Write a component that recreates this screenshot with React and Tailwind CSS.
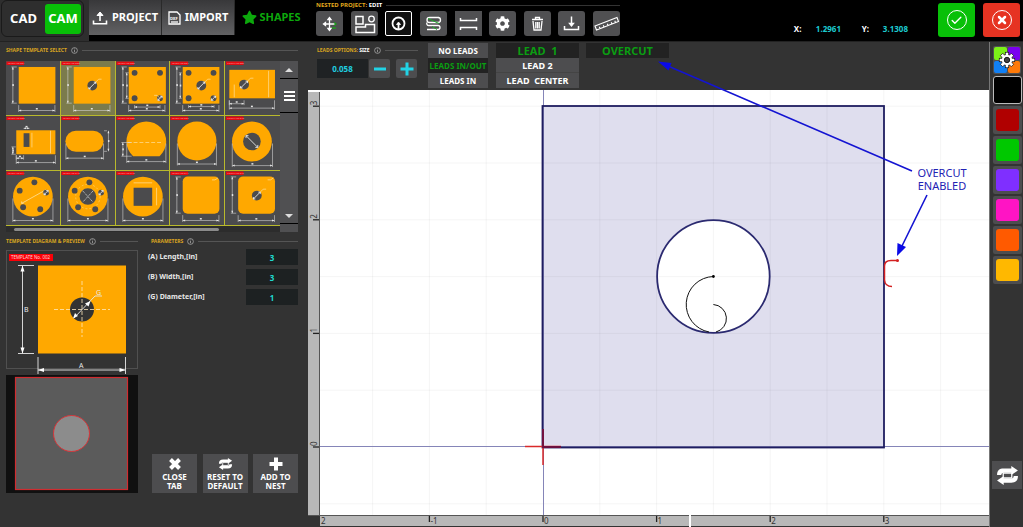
import { useState } from "react";
import { Check, X } from "lucide-react";
import { FaCog, FaStar } from "react-icons/fa";

const ORANGE = "#ffa800";
const DARK = "#4b4b4d";

// --- SHARED SMALL PIECES ---
function InfoIcon() {
  return (
    <svg viewBox="0 0 8 8" className="w-[7px] h-[7px] shrink-0" fill="none" stroke="#b5b5b5" strokeWidth="0.8">
      <circle cx="4" cy="4" r="3.3" />
      <path d="M4 3.4V6M4 1.8v0.9" />
    </svg>
  );
}

function SectionTitle({ text, extra, info = true }) {
  return (
    <div className="flex items-center gap-1 h-2 whitespace-nowrap">
      <h2 className="text-[5px] leading-2 font-bold text-[#d9a521]">
        {text}
        {extra && <span className="text-white"> {extra}</span>}
      </h2>
      {info && <InfoIcon />}
      <span className="flex-1 h-px bg-[#555]" />
    </div>
  );
}

function LoopIcon({ className }) {
  return (
    <svg viewBox="0 0 24 20" className={className} fill="#fff">
      <path d="M1 9.5C1 4.5 3.500 2.500 8 2.500H16V0L23 4.700L16 9.500V7H8.500C6 7 5.500 8 5.500 9.500Z" />
      <path d="M23 10.500C23 15.500 20.500 17.500 16 17.500H8V20L1 15.300L8 10.500V13H15.500C18 13 18.500 12 18.500 10.500Z" />
      <rect x="7.500" y="7.500" width="9" height="5" fill="#4d4d4f" stroke="#fff" strokeWidth="1.300" />
    </svg>
  );
}

function StrokeIcon({ d, width = 4 }) {
  return (
    <svg viewBox="0 0 14 14" className="w-[14px] h-[14px]" fill="none" stroke="currentColor" strokeWidth={width}>
      <path d={d} />
    </svg>
  );
}

const PLUS = "M7 0.5V13.5M0.5 7H13.5";
const MINUS = "M1 7H13";
const CROSS = "M2.500 2.500L11.500 11.500M11.500 2.500L2.500 11.500";

// --- TEMPLATE THUMBNAILS ---
function HDim({ x1, x2, y, from }) {
  return (
    <g stroke="#d5d5d5" strokeWidth="0.6" fill="#e5e5e5">
      <path d={`M${x1} ${from}V${y + 1.5}M${x2} ${from}V${y + 1.5}M${x1} ${y}H${x2}`} fill="none" />
      <path d={`M${x1} ${y}l2.500 -1v2zM${x2} ${y}l-2.500 -1v2z`} stroke="none" />
      <rect x={(x1 + x2) / 2 - 1} y={y - 2.5} width="2" height="1.500" stroke="none" />
    </g>
  );
}

function VDim({ y1, y2, x, from }) {
  return (
    <g stroke="#d5d5d5" strokeWidth="0.6" fill="#e5e5e5">
      <path d={`M${from} ${y1}H${x - 1.5}M${from} ${y2}H${x - 1.5}M${x} ${y1}V${y2}`} fill="none" />
      <path d={`M${x} ${y1}l-1 2.500h2zM${x} ${y2}l-1 -2.500h2z`} stroke="none" />
      <rect x={x - 0.5} y={(y1 + y2) / 2 - 1} width="1.500" height="2" stroke="none" />
    </g>
  );
}

function Hole({ x, y, r = 3, mark, leader }) {
  const d = r * 0.7;
  return (
    <g>
      <circle cx={x} cy={y} r={r} fill={DARK} />
      {mark && (
        <path
          d={`M${x - d} ${y + d}L${x + d} ${y - d}M${x - d} ${y + d}v-2M${x - d} ${y + d}h2M${x + d} ${y - d}v2M${x + d} ${y - d}h-2`}
          stroke="#fff" strokeWidth="0.8" fill="none"
        />
      )}
      {leader && <path d={`M${x + d} ${y - d}l3 -3h3`} stroke="#ffe2a0" strokeWidth="0.7" fill="none" />}
    </g>
  );
}

const BOLTS = [[29, 11.5], [14, 20], [17.5, 37], [35, 39]];

function Bolts() {
  return (
    <>
      {BOLTS.map(([x, y]) => <Hole key={x} x={x} y={y} />)}
      <Hole x={41} y={22} mark />
    </>
  );
}

function SquareDims() {
  return (
    <>
      <HDim x1={13} x2={50} y={50.5} from={45} />
      <VDim y1={6} y2={43} x={7} from={11} />
    </>
  );
}

const roundDims = <HDim x1={7} x2={48} y={50.5} from={28} />;

const TEMPLATES = [
  { id: "001", art: <><rect x="13" y="6" width="37.500" height="37.500" fill={ORANGE} /><SquareDims /></> },
  { id: "002", art: <><rect x="13" y="6" width="37.500" height="37.500" fill={ORANGE} /><Hole x={32} y={25} r={5} mark leader /><SquareDims /></> },
  {
    id: "003",
    art: (
      <>
        <rect x="13" y="6" width="38" height="37.500" fill={ORANGE} />
        <Hole x={19} y={12} /><Hole x={45} y={12} /><Hole x={19} y={38} /><Hole x={45} y={38} mark />
        <path d="M45 38l-3 -3h-3" stroke="#ffe2a0" strokeWidth="0.700" fill="none" />
        <SquareDims />
        <VDim y1={12} y2={38} x={11} from={13} />
        <HDim x1={19} x2={45} y={47} from={45} />
      </>
    ),
  },
  {
    id: "004",
    art: (
      <>
        <rect x="13" y="6" width="37.500" height="37.500" fill={ORANGE} />
        <Hole x={19} y={12} /><Hole x={44.5} y={12} /><Hole x={19} y={38} /><Hole x={44.5} y={38} mark />
        <Hole x={32} y={25} r={5} mark leader />
        <SquareDims />
        <VDim y1={12} y2={38} x={10.5} from={12} />
        <HDim x1={19} x2={45} y={46.5} from={45} />
      </>
    ),
  },
  {
    id: "005",
    art: (
      <>
        <rect x="4" y="9" width="46.500" height="29" fill={ORANGE} />
        <Hole x={19} y={24} r={5} mark leader />
        <path d="M44 10V37M9 24V37" stroke="#ffe2a0" strokeWidth="0.700" />
        <HDim x1={4} x2={19} y={43.5} from={40} />
        <HDim x1={4} x2={50} y={48} from={40} />
      </>
    ),
  },
  {
    id: "006",
    art: (
      <>
        <rect x="10.500" y="14.500" width="40" height="24.500" fill={ORANGE} />
        <rect x="18" y="17.500" width="6" height="14" fill={DARK} />
        <path d="M45.500 15V38M26.500 17V32" stroke="#ffe2a0" strokeWidth="0.700" />
        <HDim x1={18} x2={24} y={12.5} from={14} />
        <HDim x1={10.5} x2={18} y={43} from={40} />
        <HDim x1={10.5} x2={50.5} y={47.5} from={40} />
        <VDim y1={31.5} y2={39} x={7} from={10} />
      </>
    ),
  },
  { id: "007", art: <><rect x="4.500" y="15" width="39" height="21.500" rx="10.700" fill={ORANGE} /><HDim x1={5} x2={43.5} y={43} from={28} /><VDim y1={15} y2={36} x={48.5} from={44} /></> },
  {
    id: "008",
    art: (
      <>
        <path d="M17.500 41A20.300 20.300 0 1 1 44.500 41Z" fill={ORANGE} />
        <path d="M12 27H48" stroke="#ffe2a0" strokeWidth="0.700" strokeDasharray="4 2" />
        <VDim y1={27} y2={41} x={7} from={16} />
        <HDim x1={11} x2={51} y={46.5} from={28} />
      </>
    ),
  },
  { id: "009", art: <><circle cx="27.500" cy="25.500" r="20" fill={ORANGE} /><HDim x1={7.5} x2={47.5} y={49} from={28} /></> },
  { id: "010", art: <><circle cx="27" cy="26" r="20.300" fill={ORANGE} /><Hole x={27} y={26} r={9} /><path d="M21 20L33 32M21 20v2.500M21 20h2.500M33 32v-2.500M33 32h-2.500" stroke="#fff" strokeWidth="0.800" />{roundDims}</> },
  { id: "011", art: <><circle cx="27.500" cy="26" r="20.300" fill={ORANGE} /><path d="M16 33L41 19M16 33v-2M16 33h2" stroke="#ffe2a0" strokeWidth="0.800" /><Bolts />{roundDims}</> },
  { id: "012", art: <><circle cx="27.500" cy="26" r="20.300" fill={ORANGE} /><circle cx="27.500" cy="26" r="12.500" fill="none" stroke="#ffe2a0" strokeWidth="0.500" strokeDasharray="2 2" /><Hole x={27.5} y={26} r={8.5} /><path d="M22 20L33 32M33 20L22 32" stroke="#ddd" strokeWidth="0.700" strokeDasharray="3 1" /><Bolts />{roundDims}</> },
  { id: "013", art: <><circle cx="27.500" cy="26" r="20.300" fill={ORANGE} /><rect x="18" y="17" width="19" height="18.500" fill={DARK} /><path d="M18 12H37M41.500 17V35" stroke="#ffe2a0" strokeWidth="0.700" />{roundDims}</> },
  { id: "014", art: <><rect x="13" y="5.500" width="37.500" height="38" rx="5" fill={ORANGE} /><path d="M43 9h3l3 -2" stroke="#ffe2a0" strokeWidth="0.700" fill="none" /><SquareDims /></> },
  { id: "015", art: <><rect x="13" y="5.500" width="37.500" height="38" rx="5" fill={ORANGE} /><path d="M43 9h3l3 -2" stroke="#ffe2a0" strokeWidth="0.700" fill="none" /><Hole x={32} y={25} r={5} mark leader /><SquareDims /></> },
];

function TemplateList() {
  const [selected, setSelected] = useState("002");
  return (
    <div className="flex bg-[#4b4b4d] mt-[7px]">
      <div className="flex-1">
        <div className="grid grid-cols-5">
          {TEMPLATES.map((t) => (
            <button
              key={t.id}
              type="button"
              aria-label={`Template ${t.id}`}
              onClick={() => setSelected(t.id)}
              className={`border-r border-b border-[#b9b92c] nth-[5n]:border-r-0 ${selected === t.id ? "bg-[#7b7b4c]" : "bg-[#4b4b4d]"}`}
            >
              <svg viewBox="0 0 55 55" className="block w-full h-[54px]">
                <rect x="0.500" y="0.500" width="18" height="3.500" fill="#e80a10" />
                <text x="2" y="3.300" fontSize="2.500" fill="#f2a0a0">TEMPLATE {t.id}</text>
                {t.art}
              </svg>
            </button>
          ))}
        </div>
        <div className="h-[6px] bg-[#2c2c2c] flex items-center pl-2">
          <div className="h-[3px] w-[77%] bg-[#8b8b8b] rounded-sm" />
        </div>
      </div>
      <div className="w-[18px] flex flex-col items-center bg-[#505052]">
        <button type="button" aria-label="Scroll up" className="h-[18px] w-full flex items-center justify-center border-b border-black">
          <svg viewBox="0 0 8 4" className="w-2 h-1"><path d="M0 4L4 0L8 4Z" fill="#ddd" /></svg>
        </button>
        <button type="button" aria-label="List view" className="h-[34px] w-full flex flex-col items-center justify-center gap-[2px] border-b border-black">
          <span className="w-[11px] h-[2px] bg-white" />
          <span className="w-[11px] h-[2px] bg-white" />
          <span className="w-[11px] h-[2px] bg-white" />
        </button>
        <div className="flex-1" />
        <button type="button" aria-label="Scroll down" className="h-4 w-full flex items-center justify-center border-b border-black">
          <svg viewBox="0 0 8 4" className="w-2 h-1"><path d="M0 0L4 4L8 0Z" fill="#ddd" /></svg>
        </button>
        <div className="h-[8px]" />
      </div>
    </div>
  );
}

function TemplateDiagram() {
  return (
    <svg viewBox="6 249 132 126" className="block w-full mt-1" aria-label="Template diagram">
      <rect x="6.500" y="250.500" width="131" height="118" fill="none" stroke="#505050" />
      <rect x="9" y="254" width="44" height="7" fill="#fb0007" />
      <text x="11" y="259.300" fontSize="4.500" fill="#ffd5d5">TEMPLATE No. 002</text>
      <rect x="38" y="265.500" width="88" height="88" fill={ORANGE} />
      <circle cx="82" cy="309.500" r="12" fill="#333" />
      <g stroke="#ffe9bd" strokeWidth="0.800" strokeDasharray="4 2">
        <path d="M54 309.500H110M82 281V337" />
      </g>
      <g stroke="#e6e6e6" strokeWidth="0.900" fill="none">
        <path d="M18 265.500H34M18 353.500H34M22.500 266V353M38 357V374M125.500 357V374M38 370H125.500" />
        <path d="M74 318L95 296H102" />
      </g>
      <g fill="#fff">
        <path d="M22.500 265.500l-2 6h4zM22.500 353.500l-2 -6h4zM38 370l6 -2v4zM125.500 370l-6 -2v4z" />
        <path d="M73 318.500l2 -5.500l3 3zM90.500 301l-2 5.500l-3.500 -3z" />
      </g>
      <g fill="#e8e8e8" fontSize="7">
        <text x="24" y="311.500">B</text>
        <text x="79" y="367.500">A</text>
        <text x="96" y="295">G</text>
      </g>
    </svg>
  );
}

const PARAMS = [
  { id: "length", label: "(A) Length,[in]", value: "3" },
  { id: "width", label: "(B) Width,[in]", value: "3" },
  { id: "diameter", label: "(G) Diameter,[in]", value: "1" },
];

function ActionButton({ icon, line1, line2 }) {
  return (
    <button type="button" className="w-[45px] h-[39px] bg-[#4d4d4f] flex flex-col items-center justify-center text-white font-bold whitespace-nowrap">
      <span className="h-[14px] mb-px flex items-center">{icon}</span>
      <span className="text-[8px] leading-[9px]">{line1}<br />{line2}</span>
    </button>
  );
}

function Sidebar() {
  return (
    <aside className="w-[308px] shrink-0 bg-[#333] pl-[6px] pr-[10px] pt-1">
      <SectionTitle text="SHAPE TEMPLATE SELECT" />
      <TemplateList />
      <div className="flex gap-[10px] mt-[5px]">
        <div className="w-[132px] shrink-0">
          <SectionTitle text="TEMPLATE DIAGRAM & PREVIEW" />
          <TemplateDiagram />
          <svg viewBox="0 0 132 118" className="block w-full bg-[#101010]" aria-label="Shape preview">
            <rect x="9.500" y="2.500" width="112" height="112" fill="#5b5b5b" stroke="#d02c30" strokeWidth="1.200" />
            <circle cx="65.500" cy="58.500" r="18" fill="#8c8c8c" stroke="#d83438" />
          </svg>
        </div>
        <div className="flex-1 flex flex-col">
          <div className="pl-[3px]"><SectionTitle text="PARAMETERS" /></div>
          <div className="flex flex-col gap-1 mt-1">
            {PARAMS.map((p) => (
              <div key={p.id} className="flex items-center justify-between">
                <label htmlFor={p.id} className="text-[7px] font-bold text-[#e8e8e8]">{p.label}</label>
                <input
                  id={p.id}
                  defaultValue={p.value}
                  className="w-[52px] h-4 bg-[#1d2122] text-[#1fd9cf] text-[8px] font-bold text-center"
                />
              </div>
            ))}
          </div>
          <div className="flex justify-between mt-auto ml-1">
            <ActionButton icon={<StrokeIcon d={CROSS} />} line1="CLOSE" line2="TAB" />
            <ActionButton icon={<LoopIcon className="w-[15px] h-3" />} line1="RESET TO" line2="DEFAULT" />
            <ActionButton icon={<StrokeIcon d={PLUS} />} line1="ADD TO" line2="NEST" />
          </div>
        </div>
      </div>
    </aside>
  );
}

// --- TOP BAR ---
const TOOLS = [
  { name: "Move", art: <><path d="M13.500 7v12M8 13h11" /><path d="M12 8.500l1.500 -2l1.500 2zM12 17.500l1.500 2l1.500 -2zM9.500 11.500l-2 1.500l2 1.500z" fill="#fff" /><path d="M18 11.500l2 1.500l-2 1.500M16 17h4" stroke="#1c9a1c" /></> },
  { name: "Nest", art: <><rect x="5" y="5.500" width="7" height="7.500" strokeWidth="1.500" /><circle cx="20.500" cy="8" r="2.800" /><path d="M5 21.500V16h9.500v-2.500h9v8z" strokeWidth="1.500" /></> },
  { name: "Leads", active: true, art: <><circle cx="13.500" cy="12.500" r="6" strokeWidth="1.800" /><path d="M13.500 18V12" strokeWidth="1.800" /><path d="M11.500 13.500l2 -2.500l2 2.500z" fill="#fff" strokeWidth="0.800" /></> },
  { name: "Path order", art: <><path d="M19 6.500H9.500a2.500 2.500 0 0 0 0 5H18a2.500 2.500 0 0 0 0 -5M7 18.500H18a2 2 0 0 0 0 -4H9a2 2 0 0 1 -2 -3" /><path d="M8 7.500l11 5M17 18.500l-5 -3" stroke="#1fae2b" strokeWidth="1" /></> },
  { name: "Spacing", square: true, art: <path d="M5.500 7v2.500h16V7M5.500 19v-2.500h16V19" strokeWidth="1.500" /> },
  { name: "Settings", icon: <FaCog size={15} /> },
  { name: "Delete", art: <><path d="M8 8.500h11M11.500 8V6.500h4V8" /><path d="M9 10l1 9h7l1 -9M11.800 11v6.500M13.500 11v6.500M15.200 11v6.500" /></> },
  { name: "Save", art: <><path d="M13.500 5.500v8" strokeWidth="1.500" /><path d="M11.500 12.500h4l-2 2.500z" fill="#fff" /><path d="M6.500 15v3.500h14V15" strokeWidth="1.500" /></> },
  { name: "Measure", art: <path d="M2 15L24 6.500l1.500 4L3.500 19zM7 17.500l-0.700 -1.700M11 16l-0.700 -1.700M15 14.500l-0.700 -1.700M19 13l-0.700 -1.700M22.500 11.500l-0.700 -1.700" strokeWidth="1.100" /> },
];

function ToolButton({ tool }) {
  let look = "bg-[#505052] rounded-[3px]";
  if (tool.active) look = "bg-[#111] border border-white rounded-[2px]";
  if (tool.square) look = "bg-[#505052]";
  return (
    <button type="button" aria-label={tool.name} className={`w-[27px] h-[25px] flex items-center justify-center text-white ${look}`}>
      {tool.icon || (
        <svg viewBox="0 0 27 25" className="w-[27px] h-[25px] shrink-0" fill="none" stroke="#fff" strokeWidth="1.300">{tool.art}</svg>
      )}
    </button>
  );
}

function TopBar() {
  const tab = "w-[73px] h-[35px] flex items-center justify-center gap-[4px] text-[11px] font-bold whitespace-nowrap border-r border-[#2a2a2a]";
  return (
    <header className="flex h-[42px] shrink-0 bg-black border-b border-[#222]">
      <div className="w-[89px] shrink-0 bg-[#2e2e2e] px-px pb-1">
        <div className="h-full w-[83px] border border-[#1a1a1a] rounded-md flex items-center pr-[2px] text-white text-[13px] font-bold">
          <button type="button" className="flex-1">CAD</button>
          <button type="button" className="w-9 h-[30px] bg-[#08bf08] rounded-[3px]">CAM</button>
        </div>
      </div>
      <nav className="flex shrink-0 w-[219px]">
        <button type="button" className={`${tab} bg-linear-to-b from-[#38383a] to-[#626264] text-white`}>
          <svg viewBox="0 0 16 14" className="w-4 h-[14px]" fill="none" stroke="#fff" strokeWidth="1.600">
            <path d="M8 10V3" /><path d="M5 4.500L8 1l3 3.500z" fill="#fff" strokeWidth="1" /><path d="M1.500 9.500v3.200h13V9.500" />
          </svg>
          PROJECT
        </button>
        <button type="button" className={`${tab} bg-linear-to-b from-[#38383a] to-[#626264] text-white`}>
          <svg viewBox="0 0 13 14" className="w-[13px] h-[14px]" fill="none" stroke="#fff" strokeWidth="1.300">
            <path d="M1 1h8l3 3v9H1z" /><path d="M3 11h7" />
            <text x="2" y="8.500" fontSize="4" fill="#fff" stroke="none">DXF</text>
          </svg>
          IMPORT
        </button>
        <button type="button" className="flex-1 h-[34px] flex items-center justify-center gap-[2px] text-[11px] font-bold text-[#0ca80c]">
          <FaStar size={15} />SHAPES
        </button>
      </nav>
      <div className="w-[304px] shrink-0 ml-2 pt-px">
        <div className="flex items-center gap-1 h-[9px] whitespace-nowrap">
          <h1 className="text-[6px] leading-[9px] font-bold text-[#e0a81e]">NESTED PROJECT: <span className="text-white">EDIT</span></h1>
          <span className="flex-1 h-px bg-[#333]" />
        </div>
        <div className="flex justify-between mt-px">
          {TOOLS.map((tool) => <ToolButton key={tool.name} tool={tool} />)}
        </div>
      </div>
      <div className="flex-1" />
      <dl className="flex items-center pt-4 mr-[30px] text-[8px] font-bold text-white">
        <dt className="w-[22px]">X:</dt>
        <dd className="w-[46px] text-[#1ccbd0]">1.2961</dd>
        <dt className="w-[21px]">Y:</dt>
        <dd className="text-[#1ccbd0]">3.1308</dd>
      </dl>
      <div className="flex gap-2 pt-[3px] pr-[3px]">
        <button type="button" aria-label="Accept" className="w-[37px] h-[34px] rounded-[3px] bg-[#08c008] flex items-center justify-center text-white">
          <span className="w-5 h-5 rounded-full border border-white flex items-center justify-center"><Check size={13} strokeWidth={2.5} /></span>
        </button>
        <button type="button" aria-label="Cancel" className="w-[37px] h-[34px] rounded-[3px] bg-[#e63322] flex items-center justify-center text-white">
          <span className="w-5 h-5 rounded-full border border-white flex items-center justify-center"><X size={12} strokeWidth={5} /></span>
        </button>
      </div>
    </header>
  );
}

// --- LEADS BAR ---
function LeadsBar() {
  const opt = "block w-full h-[15px] bg-[#4d4d4f] text-white font-bold leading-[15px] whitespace-nowrap";
  const on = "block w-full h-[15px] bg-[#222] text-[#0b9d12] font-bold leading-[15px] whitespace-nowrap";
  const step = "w-[21px] h-[19px] bg-[#4d4d4f] rounded-[2px] flex items-center justify-center text-[#22d3e6]";
  return (
    <div className="h-12 shrink-0 bg-[#333] flex pl-[9px] pt-px">
      <div className="w-[101px] shrink-0 pt-[3px]">
        <SectionTitle text="LEADS OPTIONS:" extra="SIZE" />
        <div className="flex mt-[5px]">
          <input aria-label="Lead size" defaultValue="0.058" className="w-[51px] h-[19px] bg-[#1f2224] text-[#20cfe0] text-[8px] font-bold text-center" />
          <button type="button" aria-label="Decrease" className={`${step} ml-px`}><StrokeIcon d={MINUS} width={3} /></button>
          <button type="button" aria-label="Increase" className={`${step} ml-[6px]`}><StrokeIcon d={PLUS} width={3} /></button>
        </div>
      </div>
      <div className="w-[60px] shrink-0 ml-[10px] text-[8px] flex flex-col">
        <button type="button" className={opt}>NO LEADS</button>
        <button type="button" className={on}>LEADS IN/OUT</button>
        <button type="button" className={opt}>LEADS IN</button>
      </div>
      <div className="w-[83px] shrink-0 ml-2 text-[9px] flex flex-col">
        <button type="button" className={`${on} text-[11px] whitespace-pre`}>{"LEAD  1"}</button>
        <button type="button" className={`${opt} border-b border-[#444]`}>LEAD 2</button>
        <button type="button" className={`${opt} whitespace-pre`}>{"LEAD  CENTER"}</button>
      </div>
      <div className="w-[83px] shrink-0 ml-[7px] text-[11px]">
        <button type="button" className={on}>OVERCUT</button>
      </div>
    </div>
  );
}

// --- DRAWING CANVAS ---
const UNIT = 113.6;
const X0 = 543;
const Y0 = 447;

function Canvas() {
  const cols = [-1.5, -1, -0.5, 0.5, 1, 1.5, 2, 2.5, 3, 3.5];
  const rows = [-0.5, 0.5, 1, 1.5, 2, 2.5, 3];
  return (
    <svg viewBox="308 90 681 437" preserveAspectRatio="xMinYMin slice" className="block w-full flex-1 min-h-0 bg-white" aria-label="Part canvas">
      <rect x="542.500" y="106" width="341.500" height="341.500" fill="#dfdeee" />
      <circle cx="713.400" cy="276.500" r="56.500" fill="#fff" />
      <g stroke="#000" strokeOpacity="0.045" strokeWidth="1">
        {cols.map((c) => <path key={c} d={`M${X0 + c * UNIT} 90V516`} />)}
        {rows.map((r) => <path key={r} d={`M319 ${Y0 - r * UNIT}H989`} />)}
      </g>
      <path d="M319 446.500H989M543.500 90V516" stroke="#8585b8" strokeWidth="1" />
      <rect x="542.500" y="106" width="341.500" height="341.500" fill="none" stroke="#1f1d60" strokeWidth="1.800" />
      <circle cx="713.400" cy="276.500" r="56.300" fill="none" stroke="#2b2a70" strokeWidth="1.800" />
      <g fill="none" stroke="#111" strokeWidth="1">
        <path d="M713.400 276.500A28 28 0 0 0 709 332" />
        <path d="M713.400 304.500A14 14 0 0 1 716 332" />
      </g>
      <circle cx="713.400" cy="276.500" r="1.400" />
      <path d="M525 446.500H561M543 429V465" stroke="#d92a2a" strokeWidth="1.500" />
      <path d="M543 429V447H561" stroke="#6d1040" strokeWidth="1.800" fill="none" />
      <path d="M898 260.500H891Q884.500 260.500 884.500 266V280Q885 286.500 892 286.500" fill="none" stroke="#d32020" strokeWidth="1.500" />
      <circle cx="897.500" cy="260.500" r="1.500" fill="#d32020" />

      {/* RULERS */}
      <rect x="308" y="90" width="11" height="426" fill="#b8b8b8" />
      <path d="M308 515.500H989M319.500 90V516" stroke="#555" />
      <rect x="308" y="516" width="12" height="11" fill="#333" />
      <rect x="320" y="516" width="669" height="10" fill="#b8b8b8" />
      <path d="M320 526.500H989" stroke="#333" />
      <path d="M308 91H320M690 515V527" stroke="#fff" strokeWidth="2" />
      <g stroke="#222" strokeWidth="1.300">
        {[-1, 0, 1, 2, 3].map((n) => <path key={n} d={`M${X0 + n * UNIT} 516v6`} />)}
        {[0, 1, 2, 3].map((n) => <path key={n} d={`M313 ${Y0 - n * UNIT}h6`} />)}
      </g>
      <g fill="#333" fontSize="8">
        <text x="321" y="524">2</text>
        {[-1, 0, 1, 2, 3].map((n) => <text key={n} x={X0 + n * UNIT + 1} y="524">{n}</text>)}
        {[0, 1, 2, 3].map((n) => (
          <text key={n} transform={`translate(317 ${Y0 - n * UNIT - 1}) rotate(-90)`}>{n}</text>
        ))}
      </g>
    </svg>
  );
}

// Callout drawn above both the leads bar and the canvas
function Callout() {
  return (
    <svg viewBox="308 42 681 485" preserveAspectRatio="xMinYMin slice" className="absolute inset-0 w-full h-full pointer-events-none">
      <g stroke="#1414d2" strokeWidth="1.600">
        <path d="M912 171L668 66M927 195L901 248" />
      </g>
      <path d="M658 61.500L671.500 63L668.500 70.500ZM897 256L897.500 243L906 247Z" fill="#0a0ae6" />
      <g fill="#2222b4" fontSize="11" textAnchor="middle">
        <text x="942" y="177">OVERCUT</text>
        <text x="942" y="190">ENABLED</text>
      </g>
    </svg>
  );
}

// --- COLOR PALETTE ---
const COLORS = [
  { name: "Red", bg: "bg-[#b00000]" },
  { name: "Green", bg: "bg-[#00c800]" },
  { name: "Purple", bg: "bg-[#7f2fff]" },
  { name: "Pink", bg: "bg-[#ff14c4]" },
  { name: "Orange", bg: "bg-[#ff5a00]" },
  { name: "Amber", bg: "bg-[#ffb800]" },
];

function Palette() {
  return (
    <aside className="w-[34px] shrink-0 bg-[#333] border-l border-[#777] flex flex-col items-center gap-[2px] pt-1 pl-px">
      <button type="button" aria-label="Color settings" className="relative w-7 h-7 bg-[#505052] rounded-[2px] grid grid-cols-2 gap-px p-px">
        <span className="bg-[#7cf018] rounded-[2px]" />
        <span className="bg-[#7a00f0] rounded-[2px]" />
        <span className="bg-[#1180f5] rounded-[2px]" />
        <span className="bg-[#ff7a08] rounded-[2px]" />
        <svg viewBox="-10 -10 20 20" className="absolute inset-0 m-auto w-[18px] h-[18px]">
          <g fill="#fff" stroke="#222" strokeWidth="1">
            {[0, 45, 90, 135].map((a) => <rect key={a} x="-1.800" y="-8.500" width="3.600" height="17" transform={`rotate(${a})`} />)}
            <circle r="6.300" />
          </g>
          <g fill="#fff">
            {[0, 45, 90, 135].map((a) => <rect key={a} x="-1.300" y="-8" width="2.600" height="16" transform={`rotate(${a})`} />)}
          </g>
          <circle r="3" fill="#444" stroke="#111" />
        </svg>
      </button>
      <button type="button" aria-label="Black" className="w-[29px] h-7 bg-black border border-[#bbb] rounded-[3px]" />
      {COLORS.map((c) => (
        <button key={c.name} type="button" aria-label={c.name} className="w-[29px] h-7 bg-[#4d4d4f] rounded-[2px] p-[3px]">
          <span className={`block h-full rounded-[3px] ${c.bg}`} />
        </button>
      ))}
      <button type="button" aria-label="Refresh view" className="w-[30px] h-7 bg-[#4d4d4f] flex items-center justify-center mt-auto mb-[38px]">
        <LoopIcon className="w-[23px] h-[19px]" />
      </button>
    </aside>
  );
}

export default function App() {
  return (
    <div className="h-screen flex flex-col bg-[#333] overflow-hidden font-['Noto_Sans','Open_Sans',sans-serif]">
      <TopBar />
      <div className="flex flex-1 min-h-0">
        <Sidebar />
        <main className="relative flex-1 min-w-0 flex flex-col">
          <LeadsBar />
          <Canvas />
          <Callout />
        </main>
        <Palette />
      </div>
    </div>
  );
}
